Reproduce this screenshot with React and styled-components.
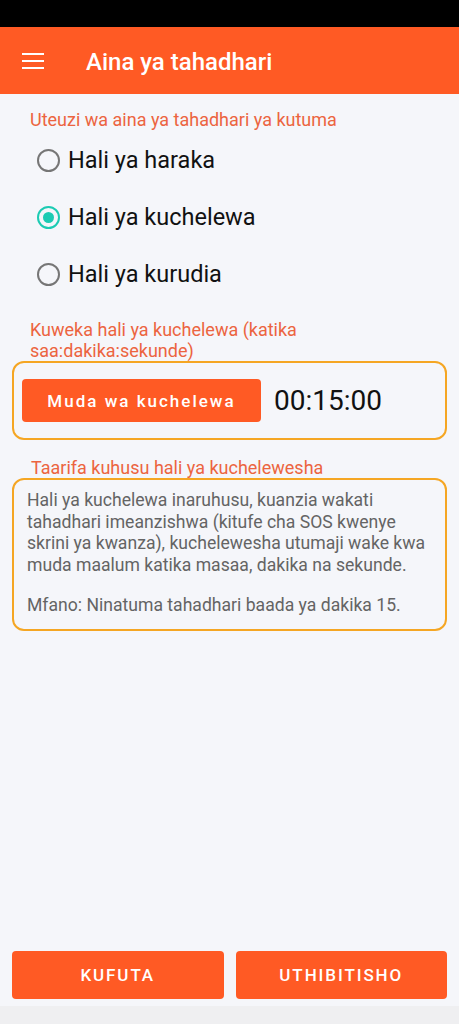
import styled, { createGlobalStyle } from "styled-components";

const GlobalStyle = createGlobalStyle`
  html, body {
    margin: 0;
    padding: 0;
    background: #f5f6fa;
    font-family: Roboto, "Noto Sans", sans-serif;
  }
`;

const Screen = styled.div`
  width: 459px;
  height: 1024px;
  display: flex;
  flex-direction: column;
  background: #f5f6fa;
`;

const StatusBar = styled.div`
  height: 27px;
  background: #000;
`;

const AppBar = styled.header`
  height: 67px;
  background: #ff5a24;
  display: flex;
  align-items: center;
  padding-left: 22px;
  gap: 42px;
  color: #fff;

  & h1 {
    margin: 0;
    font-size: 24px;
    font-weight: 500;
    line-height: 28px;
    padding-top: 3px;
  }
`;

const Content = styled.main`
  flex: 1;
  display: flex;
  flex-direction: column;
  padding: 0 12px;
`;

const SectionLabel = styled.div`
  color: #ec6440;
  font-size: 18px;
  line-height: 21px;
  padding-left: ${(p) => p.indent || 18}px;
  margin-top: ${(p) => p.top || 0}px;
`;

const RadioList = styled.div`
  display: flex;
  flex-direction: column;
  padding: 18px 0 33px 25px;
  gap: 33px;
`;

const RadioRow = styled.label`
  display: flex;
  align-items: center;
  gap: 8px;
  height: 24px;
  font-size: 23.5px;
  color: #111;
`;

const RadioDot = styled.span`
  width: 19px;
  height: 19px;
  border-radius: 50%;
  border: 2.5px solid ${(p) => (p.checked ? "#1ccbb3" : "#767676")};
  display: flex;
  align-items: center;
  justify-content: center;

  &::after {
    content: "";
    width: 11px;
    height: 11px;
    border-radius: 50%;
    background: #1ccbb3;
    display: ${(p) => (p.checked ? "block" : "none")};
  }
`;

const Card = styled.div`
  box-sizing: border-box;
  border: 2px solid #f5a623;
  border-radius: 12px;
`;

const DelayCard = styled(Card)`
  display: flex;
  align-items: center;
  height: 79px;
  padding-left: 8px;
  gap: 13px;
`;

const OrangeButton = styled.button`
  border: none;
  border-radius: 4px;
  background: #ff5a24;
  color: #fff;
  font-family: Roboto, "Noto Sans", sans-serif;
  font-size: 17px;
  font-weight: 500;
  letter-spacing: ${(p) => (p.upper ? 1.9 : 2)}px;
  height: ${(p) => p.h || 48}px;
  width: ${(p) => p.w || "100%"};
  text-transform: ${(p) => (p.upper ? "uppercase" : "none")};
`;

const Timer = styled.span`
  font-size: 28px;
  color: #111;
`;

const InfoCard = styled(Card)`
  padding: 10px 10px 12px 13px;
  color: #646464;
  font-size: 17.6px;
  line-height: 21.5px;

  & p {
    margin: 0;
    white-space: nowrap;
  }
  & p + p {
    margin-top: 19px;
  }
`;

const Footer = styled.footer`
  display: grid;
  grid-template-columns: 1fr 1fr;
  gap: 12px;
  padding: 0 12px 7px;
`;

const NavBar = styled.div`
  height: 18px;
  background: #efeff1;
`;

const MenuIcon = () => (
  <svg width="22" height="16" viewBox="0 0 22 16">
    <rect x="0" y="0" width="22" height="2" fill="#fff" />
    <rect x="0" y="7" width="22" height="2" fill="#fff" />
    <rect x="0" y="14" width="22" height="2" fill="#fff" />
  </svg>
);

const options = ["Hali ya haraka", "Hali ya kuchelewa", "Hali ya kurudia"];

const App = () => {
  return (
    <Screen>
      <GlobalStyle />
      <StatusBar />
      <AppBar>
        <MenuIcon />
        <h1>Aina ya tahadhari</h1>
      </AppBar>
      <Content>
        <SectionLabel top={15}>Uteuzi wa aina ya tahadhari ya kutuma</SectionLabel>
        <RadioList>
          {options.map((o, i) => (
            <RadioRow key={o}>
              <RadioDot checked={i === 1} />
              {o}
            </RadioRow>
          ))}
        </RadioList>
        <SectionLabel>
          Kuweka hali ya kuchelewa (katika
          <br />
          saa:dakika:sekunde)
        </SectionLabel>
        <DelayCard>
          <OrangeButton w="239px" h={43}>Muda wa kuchelewa</OrangeButton>
          <Timer>00:15:00</Timer>
        </DelayCard>
        <SectionLabel top={17} indent={19}>
          Taarifa kuhusu hali ya kuchelewesha
        </SectionLabel>
        <InfoCard>
          <p>
            Hali ya kuchelewa inaruhusu, kuanzia wakati
            <br />
            tahadhari imeanzishwa (kitufe cha SOS kwenye
            <br />
            skrini ya kwanza), kuchelewesha utumaji wake kwa
            <br />
            muda maalum katika masaa, dakika na sekunde.
          </p>
          <p>Mfano: Ninatuma tahadhari baada ya dakika 15.</p>
        </InfoCard>
      </Content>
      <Footer>
        <OrangeButton upper>Kufuta</OrangeButton>
        <OrangeButton upper>Uthibitisho</OrangeButton>
      </Footer>
      <NavBar />
    </Screen>
  );
};

export default App;
